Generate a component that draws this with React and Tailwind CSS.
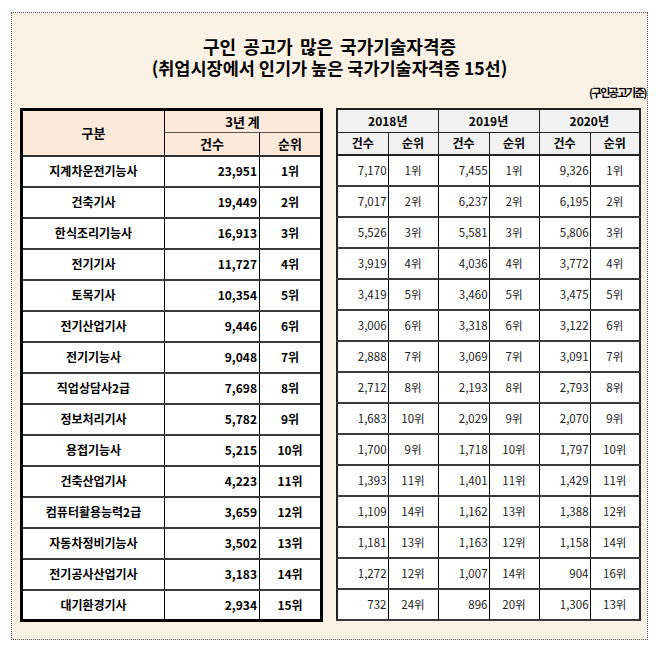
import React from 'react';

// 국가기술자격증 구인공고 순위 표
const rows = [
  ['지계차운전기능사', '23,951', '1위', '7,170', '1위', '7,455', '1위', '9,326', '1위'],
  ['건축기사', '19,449', '2위', '7,017', '2위', '6,237', '2위', '6,195', '2위'],
  ['한식조리기능사', '16,913', '3위', '5,526', '3위', '5,581', '3위', '5,806', '3위'],
  ['전기기사', '11,727', '4위', '3,919', '4위', '4,036', '4위', '3,772', '4위'],
  ['토목기사', '10,354', '5위', '3,419', '5위', '3,460', '5위', '3,475', '5위'],
  ['전기산업기사', '9,446', '6위', '3,006', '6위', '3,318', '6위', '3,122', '6위'],
  ['전기기능사', '9,048', '7위', '2,888', '7위', '3,069', '7위', '3,091', '7위'],
  ['직업상담사2급', '7,698', '8위', '2,712', '8위', '2,193', '8위', '2,793', '8위'],
  ['정보처리기사', '5,782', '9위', '1,683', '10위', '2,029', '9위', '2,070', '9위'],
  ['용접기능사', '5,215', '10위', '1,700', '9위', '1,718', '10위', '1,797', '10위'],
  ['건축산업기사', '4,223', '11위', '1,393', '11위', '1,401', '11위', '1,429', '11위'],
  ['컴퓨터활용능력2급', '3,659', '12위', '1,109', '14위', '1,162', '13위', '1,388', '12위'],
  ['자동차정비기능사', '3,502', '13위', '1,181', '13위', '1,163', '12위', '1,158', '14위'],
  ['전기공사산업기사', '3,183', '14위', '1,272', '12위', '1,007', '14위', '904', '16위'],
  ['대기환경기사', '2,934', '15위', '732', '24위', '896', '20위', '1,306', '13위'],
];

const years = ['2018년', '2019년', '2020년'];

export default function App() {
  return (
    <div className="bg-white w-[657px] h-[647px] pt-[12px] pl-[11px] font-['Noto_Sans_CJK_KR',sans-serif] text-black">
      <div className="w-[637px] h-[628px] border border-dotted border-[#555] bg-[#fbf2e6] overflow-hidden">
        {/* title */}
        <div className="pt-[23px] text-center font-bold">
          <p className="text-[18px] leading-[21px] [word-spacing:3px]">구인 공고가 많은 국가기술자격증</p>
          <p className="text-[17.5px] leading-[21px]">(취업시장에서 인기가 높은 국가기술자격증 15선)</p>
        </div>
        <div className="flex justify-end mt-[6px] h-[16px] text-[11px] font-bold leading-[16px] tracking-[-1.5px] whitespace-nowrap">
          <span className="pr-[1px]">(구인공고기준)</span>
        </div>

        <div className="flex gap-[13px] pl-[8px] mt-[8px]">
          {/* 3년 계 */}
          <table className="table-fixed border-collapse border-[3px] border-black bg-white w-[300px]">
            <colgroup>
              <col className="w-[143px]" />
              <col className="w-[95px]" />
              <col className="w-[62px]" />
            </colgroup>
            <thead className="bg-[#fde9d9] text-[13px] font-semibold">
              <tr className="h-[23px]">
                <th rowSpan={2} className="border-r border-black border-b-2 border-b-[#333] font-semibold">구분</th>
                <th colSpan={2} className="border-b border-[#555] font-semibold">3년 계</th>
              </tr>
              <tr className="h-[23px]">
                <th className="border-r border-black border-b-2 border-b-[#333] font-semibold">건수</th>
                <th className="border-b-2 border-[#333] font-semibold">순위</th>
              </tr>
            </thead>
            <tbody className="text-[12px] font-bold">
              {rows.map((r, i) => (
                <tr key={r[0]} className={`h-[31px] ${i < rows.length - 1 ? 'border-b-2 border-[#3a3a3a]' : ''}`}>
                  <td className="text-center border-r border-black">{r[0]}</td>
                  <td className="text-right pr-[2px] border-r border-black">{r[1]}</td>
                  <td className="text-center">{r[2]}</td>
                </tr>
              ))}
            </tbody>
          </table>

          {/* 연도별 */}
          <table className="table-fixed border-collapse border-2 border-[#222] bg-white w-[303px] self-start">
            <colgroup>
              <col className="w-[51px]" />
              <col className="w-[50px]" />
              <col className="w-[51px]" />
              <col className="w-[50px]" />
              <col className="w-[51px]" />
              <col className="w-[50px]" />
            </colgroup>
            <thead className="bg-[#f2f2f2] text-[12px] font-semibold">
              <tr className="h-[23px]">
                {years.map((y) => (
                  <th key={y} colSpan={2} className="border border-[#222] font-semibold">{y}</th>
                ))}
              </tr>
              <tr className="h-[23px]">
                {years.map((y) => (
                  <React.Fragment key={y}>
                    <th className="border border-[#222] border-b-2 font-semibold">건수</th>
                    <th className="border border-[#222] border-b-2 font-semibold">순위</th>
                  </React.Fragment>
                ))}
              </tr>
            </thead>
            <tbody className="text-[11.5px] text-[#222]">
              {rows.map((r) => (
                <tr key={r[0]} className="h-[31px] border-b-2 border-[#3a3a3a]">
                  {r.slice(3).map((c, j) => (
                    <td
                      key={j}
                      className={`border-x border-black ${j % 2 === 0 ? 'text-right pr-[1px]' : 'text-center'}`}
                    >
                      {c}
                    </td>
                  ))}
                </tr>
              ))}
            </tbody>
          </table>
        </div>
      </div>
    </div>
  );
}
